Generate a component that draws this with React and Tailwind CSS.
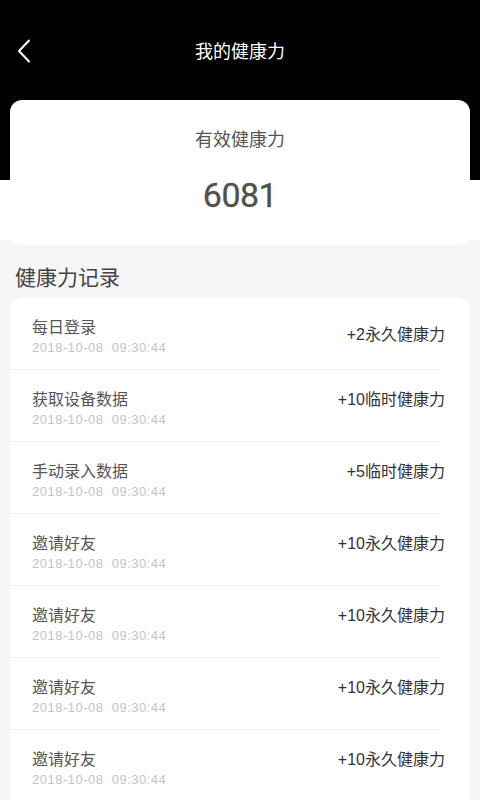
import React from "react";

const records = [
  { title: "每日登录", value: "+2永久健康力", first: true },
  { title: "获取设备数据", value: "+10临时健康力" },
  { title: "手动录入数据", value: "+5临时健康力" },
  { title: "邀请好友", value: "+10永久健康力" },
  { title: "邀请好友", value: "+10永久健康力" },
  { title: "邀请好友", value: "+10永久健康力" },
  { title: "邀请好友", value: "+10永久健康力" },
];

const font = { fontFamily: '"Liberation Sans", "Noto Sans CJK SC", sans-serif' };

function RecordRow({ title, value, first }) {
  return (
    <div className="h-[72px]">
      <div className="flex h-full justify-between items-start pl-[22px] pr-[25px] pt-[19px] mr-[30px] border-b border-[#efefef]">
        <div>
          <div className="text-[16px] leading-[22px] text-[#555]">{title}</div>
          <div className="text-[13px] leading-[16px] mt-[1px] text-[#c4c4c4] tracking-[0.5px] whitespace-pre">
            {"2018-10-08  09:30:44"}
          </div>
        </div>
        <div
          className={
            "text-[16px] leading-[22px] text-[#333] -mr-[30px] " +
            (first ? "mt-[7px]" : "mt-0")
          }
        >
          {value}
        </div>
      </div>
    </div>
  );
}

export default function App() {
  return (
    <div className="min-h-screen bg-[#f6f6f6] overflow-hidden" style={font}>
      <div className="bg-black h-[100px] grid grid-cols-[60px_1fr_60px] items-center">
        <div className="pl-[16px] pt-[2px] flex items-center">
          <svg width="16" height="24" viewBox="0 0 16 24" fill="none">
            <polyline
              points="13,1.5 3,12 13,22.5"
              stroke="#fff"
              strokeWidth="2"
              strokeLinecap="round"
              strokeLinejoin="round"
            />
          </svg>
        </div>
        <div className="text-center text-white text-[18px] leading-[24px] pt-[3px]">我的健康力</div>
        <div />
      </div>

      <div className="px-[10px] bg-[linear-gradient(to_bottom,#000_0,#000_80px,#fff_80px,#fff_140px,transparent_140px)]">
        <div className="h-[145px] rounded-[12px] bg-white flex flex-col items-center">
          <div className="pt-[28px] text-[18px] leading-[24px] text-[#555]">有效健康力</div>
          <div
            className="mt-[23px] text-[34px] leading-[40px] text-[#505050] tracking-[-0.5px]"
            style={{ fontFamily: 'Roboto, "Liberation Sans", sans-serif', WebkitTextStroke: "0.3px #505050" }}
          >
            6081
          </div>
        </div>
      </div>

      <h2 className="px-[15px] pt-[19px] text-[21px] leading-[28px] text-[#444]">
        健康力记录
      </h2>

      <div className="mx-[10px] mt-[6px] rounded-t-[12px] bg-white">
        {records.map((r, i) => (
          <RecordRow key={i} {...r} />
        ))}
      </div>
    </div>
  );
}
